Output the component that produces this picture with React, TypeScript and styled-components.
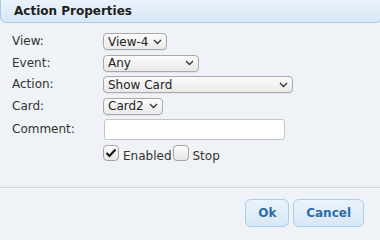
import React from "react";
import styled, { createGlobalStyle } from "styled-components";

const Global = createGlobalStyle`
  html, body { margin: 0; padding: 0; }
  body {
    background: #eff2f6;
    font-family: "DejaVu Sans", Verdana, sans-serif;
    font-size: 12px;
    color: #333;
    width: 380px;
    height: 227px;
    overflow: hidden;
  }
`;

const Dialog = styled.div`
  width: 380px;
  height: 227px;
  display: flex;
  flex-direction: column;
`;

const Header = styled.div`
  box-sizing: border-box;
  height: 24px;
  margin: -1px -2px 0 0;
  padding: 4px 0 0 13px;
  background: linear-gradient(#eaf3fb, #d9e8f6);
  border: 1px solid #a7cbe9;
  border-radius: 0 0 6px 6px;
  font-weight: bold;
  font-size: 12px;
  color: #1e1e1e;
`;

const Form = styled.div`
  display: grid;
  grid-template-columns: 91px 1fr;
  grid-template-rows: 17px 17px 17px 17px 21px 16px;
  row-gap: 4.5px;
  padding: 10px 0 0 12px;
  align-items: center;
`;

const Label = styled.div`
  color: #333;
  line-height: 17px;
`;

const SelectBox = styled.div<{ $w: number }>`
  box-sizing: border-box;
  width: ${(p) => p.$w}px;
  height: 17px;
  display: flex;
  align-items: center;
  justify-content: space-between;
  padding: 0 4px 0 4px;
  background: linear-gradient(#fbfbfb, #e9e9e9);
  border: 1px solid #a9a9a9;
  border-radius: 4px;
  color: #222;
  box-shadow: 0 1px 0 rgba(0, 0, 0, 0.05);
`;

const Chevron = () => (
  <svg width="9" height="6" viewBox="0 0 9 6">
    <path d="M1 1 L4.5 4.5 L8 1" fill="none" stroke="#333" strokeWidth="1.3" />
  </svg>
);

const Select = ({ w, value }: { w: number; value: string }) => (
  <SelectBox $w={w}>
    <span>{value}</span>
    <Chevron />
  </SelectBox>
);

const TextInput = styled.input`
  box-sizing: border-box;
  width: 181px;
  height: 21px;
  margin-left: 1px;
  background: #fff;
  border: 1px solid #c6c6c6;
  border-radius: 3px;
  font-family: inherit;
  font-size: 12px;
  outline: none;
`;

const FieldCell = styled.div`
  display: flex;
  align-items: center;
  height: 100%;
`;

const CheckRow = styled.div`
  grid-column: 2;
  display: flex;
  align-items: flex-start;
  height: 16px;
`;

const Box = styled.span`
  box-sizing: border-box;
  flex: none;
  width: 16px;
  height: 16px;
  display: inline-flex;
  align-items: center;
  justify-content: center;
  background: linear-gradient(#fdfdfd, #e6e6e6);
  border: 1px solid #a4a4a4;
  border-radius: 4px;
`;

const CheckText = styled.span`
  margin: 4px 1px 0 4px;
  color: #333;
`;

const Check = ({ checked, label }: { checked: boolean; label: string }) => (
  <>
    <Box>
      {checked && (
        <svg width="12" height="10" viewBox="0 0 12 10">
          <path d="M1.5 5 L4.5 8 L10.5 1.5" fill="none" stroke="#111" strokeWidth="2" />
        </svg>
      )}
    </Box>
    <CheckText>{label}</CheckText>
  </>
);

const Spacer = styled.div`
  flex: 1;
`;

const Divider = styled.div`
  height: 1px;
  background: #d5d5d5;
  border-bottom: 1px solid #f7f7f7;
`;

const Footer = styled.div`
  display: flex;
  justify-content: flex-end;
  gap: 4px;
  padding: 10px 16px 0 0;
  height: 28px;
`;

const Button = styled.button<{ $w?: number }>`
  box-sizing: border-box;
  height: 28px;
  ${(p) => (p.$w ? `width: ${p.$w}px;` : "")}
  padding: 0 12px;
  background: linear-gradient(#eaf3fb, #d7e8f6);
  border: 1px solid #a9cdea;
  border-radius: 6px;
  font-family: "DejaVu Sans", Verdana, sans-serif;
  font-weight: bold;
  font-size: 12px;
  color: #2b6ea6;
`;

export default function App() {
  return (
    <>
      <Global />
      <Dialog>
        <Header>Action Properties</Header>
        <Form>
          <Label>View:</Label>
          <FieldCell>
            <Select w={64} value="View-4" />
          </FieldCell>
          <Label>Event:</Label>
          <FieldCell>
            <Select w={96} value="Any" />
          </FieldCell>
          <Label>Action:</Label>
          <FieldCell>
            <Select w={190} value="Show Card" />
          </FieldCell>
          <Label>Card:</Label>
          <FieldCell>
            <Select w={60} value="Card2" />
          </FieldCell>
          <Label>Comment:</Label>
          <FieldCell>
            <TextInput />
          </FieldCell>
          <CheckRow>
            <Check checked label="Enabled" />
            <Check checked={false} label="Stop" />
          </CheckRow>
        </Form>
        <Spacer />
        <Divider />
        <Footer>
          <Button $w={44}>Ok</Button>
          <Button>Cancel</Button>
        </Footer>
      </Dialog>
    </>
  );
}
